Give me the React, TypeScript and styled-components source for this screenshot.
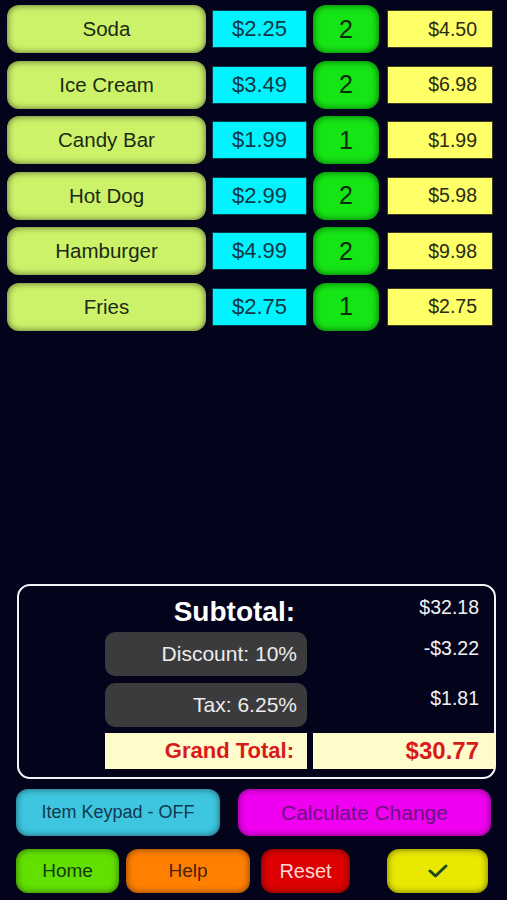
import React from "react";
import styled, { createGlobalStyle } from "styled-components";

const Global = createGlobalStyle`
  html, body { margin: 0; padding: 0; background: #04031c; }
  body { font-family: "Liberation Sans", Arial, sans-serif; }
`;

const Page = styled.div`
  width: 507px;
  height: 900px;
  background: #04031c;
  display: flex;
  flex-direction: column;
  box-sizing: border-box;
  padding: 5px 0 7px;
  overflow: hidden;
`;

const ItemList = styled.div`
  display: flex;
  flex-direction: column;
  gap: 7.5px;
  padding-left: 7px;
`;

const ItemRow = styled.div`
  display: grid;
  grid-template-columns: 199px 95px 66px 108px;
  column-gap: 6px;
  align-items: center;
  height: 48px;
  & > :nth-child(4) { margin-left: 2px; }
`;

const NameButton = styled.div`
  height: 48px;
  border-radius: 12px;
  background: #ccf26a;
  box-shadow: inset 0 0 7px rgba(0, 0, 0, 0.6);
  display: flex;
  align-items: center;
  justify-content: center;
  font-size: 20.5px;
  color: #1c2a12;
`;

const PriceBox = styled.div`
  height: 38px;
  box-sizing: border-box;
  background: #00f4ff;
  border: 1px solid #0b3a48;
  display: flex;
  align-items: center;
  justify-content: center;
  font-size: 22px;
  color: #0f3844;
`;

const QtyButton = styled.div`
  height: 48px;
  border-radius: 13px;
  background: #15e415;
  box-shadow: inset 0 0 7px rgba(0, 0, 0, 0.6);
  display: flex;
  align-items: center;
  justify-content: center;
  font-size: 25px;
  color: #0c2a0c;
`;

const TotalBox = styled.div`
  height: 38px;
  box-sizing: border-box;
  background: #ffff68;
  border: 1px solid #3a3a20;
  display: flex;
  align-items: center;
  justify-content: flex-end;
  padding-right: 15px;
  font-size: 19.5px;
  color: #2a2a14;
`;

const Summary = styled.div`
  margin: auto 0 0 17px;
  width: 479px;
  height: 195px;
  box-sizing: border-box;
  border: 2px solid #f4f4f8;
  border-radius: 13px;
  display: grid;
  grid-template-columns: 80px 202px 181px;
  grid-template-rows: 46px 44px 51px 42px;
  column-gap: 6px;
  padding-bottom: 8px;
`;

const SubtotalLabel = styled.div`
  grid-column: 2;
  grid-row: 1;
  display: flex;
  align-items: center;
  justify-content: flex-end;
  padding: 5px 12px 0 0;
  font-size: 28px;
  font-weight: bold;
  color: #ffffff;
`;

const Value = styled.div<{ $row: number; $top: number }>`
  grid-column: 3;
  grid-row: ${(p) => p.$row};
  text-align: right;
  padding: ${(p) => p.$top}px 15px 0 0;
  font-size: 19.5px;
  color: #f2f2f2;
`;

const Pill = styled.div<{ $row: number; $mt: number }>`
  grid-column: 2;
  grid-row: ${(p) => p.$row};
  margin-top: ${(p) => p.$mt}px;
  height: 44px;
  border-radius: 10px;
  background: #3b3b3d;
  display: flex;
  align-items: center;
  justify-content: flex-end;
  padding-right: 10px;
  font-size: 21px;
  color: #ececec;
`;

const GrandCell = styled.div<{ $col: number; $pr: number }>`
  grid-column: ${(p) => p.$col};
  grid-row: 4;
  margin-top: 6px;
  height: 36px;
  background: #fffbcb;
  display: flex;
  align-items: center;
  justify-content: flex-end;
  padding-right: ${(p) => p.$pr}px;
  font-size: 22px;
  font-weight: bold;
  color: #d81a1a;
`;

const GrandValue = styled(GrandCell)`
  font-size: 24px;
  margin-right: -1px;
`;

const ActionRow = styled.div`
  display: flex;
  margin-top: 10px;
  padding-left: 16px;
  gap: 18px;
`;

const NavRow = styled.div`
  display: flex;
  margin-top: 13px;
  padding-left: 16px;
`;

const Btn = styled.div<{ $bg: string; $fg: string; $w: number; $h: number; $fs: number; $ml?: number }>`
  width: ${(p) => p.$w}px;
  height: ${(p) => p.$h}px;
  margin-left: ${(p) => p.$ml ?? 0}px;
  border-radius: 12px;
  background: ${(p) => p.$bg};
  color: ${(p) => p.$fg};
  font-size: ${(p) => p.$fs}px;
  box-shadow: inset 0 0 7px rgba(0, 0, 0, 0.55);
  display: flex;
  align-items: center;
  justify-content: center;
  flex-shrink: 0;
`;

const items = [
  { name: "Soda", price: "$2.25", qty: 2, total: "$4.50" },
  { name: "Ice Cream", price: "$3.49", qty: 2, total: "$6.98" },
  { name: "Candy Bar", price: "$1.99", qty: 1, total: "$1.99" },
  { name: "Hot Dog", price: "$2.99", qty: 2, total: "$5.98" },
  { name: "Hamburger", price: "$4.99", qty: 2, total: "$9.98" },
  { name: "Fries", price: "$2.75", qty: 1, total: "$2.75" },
];

const CheckIcon = () => (
  <svg width="20" height="14" viewBox="0 0 20 14">
    <polyline points="2,7 7.5,12 18,2" fill="none" stroke="#1d4a1a" strokeWidth="3" strokeLinecap="round" strokeLinejoin="round" />
  </svg>
);

export default function App() {
  return (
    <>
      <Global />
      <Page>
        <ItemList>
          {items.map((it) => (
            <ItemRow key={it.name}>
              <NameButton>{it.name}</NameButton>
              <PriceBox>{it.price}</PriceBox>
              <QtyButton>{it.qty}</QtyButton>
              <TotalBox>{it.total}</TotalBox>
            </ItemRow>
          ))}
        </ItemList>

        <Summary>
          <SubtotalLabel>Subtotal:</SubtotalLabel>
          <Value $row={1} $top={10}>$32.18</Value>
          <Pill $row={2} $mt={0}>Discount: 10%</Pill>
          <Value $row={2} $top={5}>-$3.22</Value>
          <Pill $row={3} $mt={7}>Tax: 6.25%</Pill>
          <Value $row={3} $top={11}>$1.81</Value>
          <GrandCell $col={2} $pr={13}>Grand Total:</GrandCell>
          <GrandValue $col={3} $pr={16}>$30.77</GrandValue>
        </Summary>

        <ActionRow>
          <Btn $bg="#3ec6e0" $fg="#12384e" $w={204} $h={47} $fs={18}>Item Keypad - OFF</Btn>
          <Btn $bg="#f000f0" $fg="#6a1282" $w={253} $h={47} $fs={21}>Calculate Change</Btn>
        </ActionRow>

        <NavRow>
          <Btn $bg="#62e000" $fg="#123a10" $w={103} $h={44} $fs={19}>Home</Btn>
          <Btn $bg="#ff7f00" $fg="#4a2206" $w={124} $h={44} $fs={19} $ml={7}>Help</Btn>
          <Btn $bg="#dc0000" $fg="#ffd6d6" $w={89} $h={44} $fs={20} $ml={11}>Reset</Btn>
          <Btn $bg="#e8e800" $fg="#1d4a1a" $w={101} $h={44} $fs={19} $ml={37}><CheckIcon /></Btn>
        </NavRow>
      </Page>
    </>
  );
}
